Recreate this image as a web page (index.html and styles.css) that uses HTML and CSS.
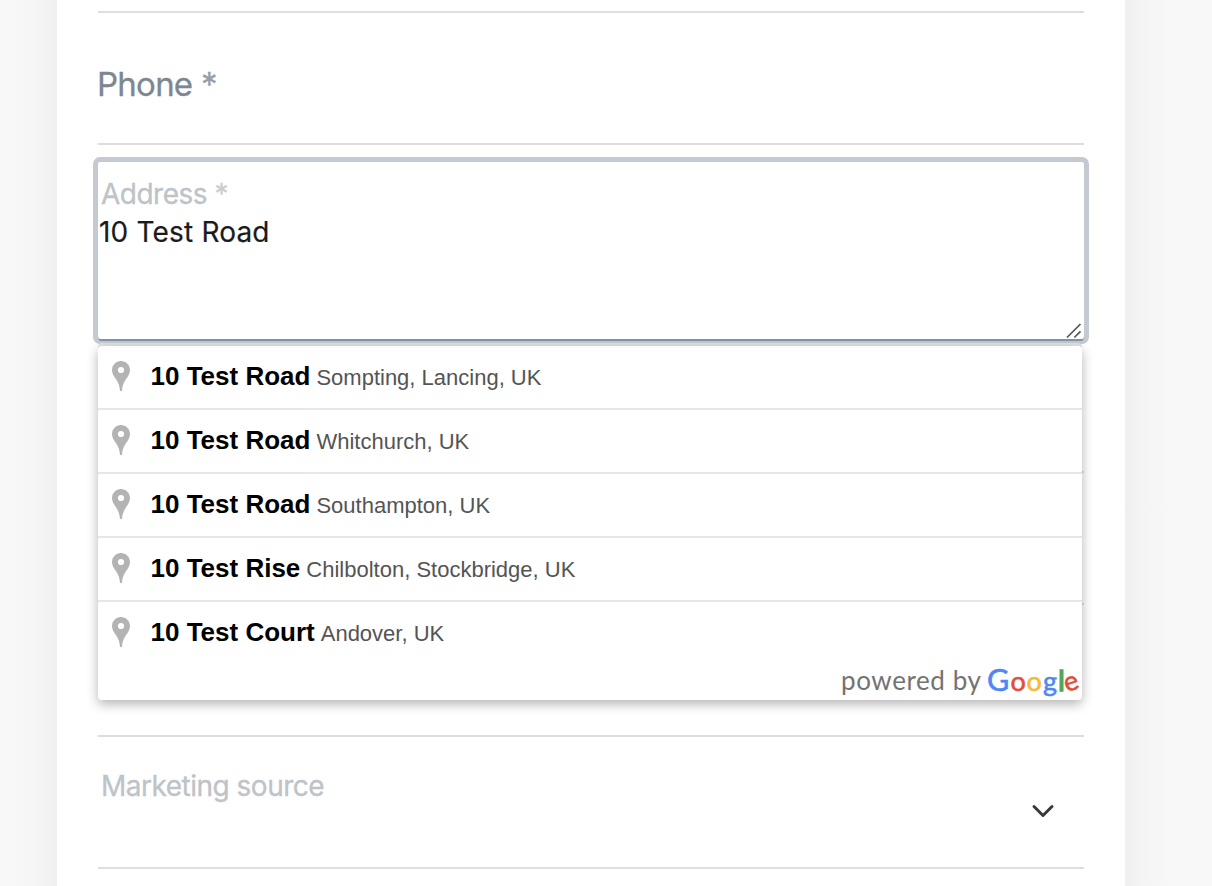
FILE: index.html
```html
<!DOCTYPE html>
<html lang="en">
<head>
<meta charset="utf-8">
<title>Contact details</title>
<link rel="stylesheet" href="styles.css">
</head>
<body>
<svg class="defs" width="0" height="0" aria-hidden="true">
  <symbol id="pin" viewBox="0 0 18 30"><path fill="#b3b3b3" fill-rule="evenodd" d="M9 0C4 0 0 4 0 9c0 3 1.300 5.200 3 7.800C6 21.300 7.600 24 8 30h2c.4-6 2-8.700 5-13.200 1.700-2.600 3-4.800 3-7.800 0-5-4-9-9-9zm0 5.900a3.100 3.100 0 1 1 0 6.200 3.100 3.100 0 0 1 0-6.200z"/></symbol>
</svg>
<main class="card">
  <div class="field field-cut"></div>
  <div class="field field-phone"><label class="label">Phone <span class="req">*</span></label></div>
  <div class="address">
    <div class="address-box">
      <label class="small-label">Address <span class="req">*</span></label>
      <div class="value">10 Test Road</div>
      <svg class="grip" width="16" height="16" viewBox="0 0 16 16" fill="none" stroke="#555" stroke-width="1.700"><path d="M1 14.500 14.500 1M8.300 14.500l6.200-6.200"/></svg>
    </div>
    <div class="suggestions">
      <div class="item"><svg class="pin"><use href="#pin"/></svg><b>10 Test Road</b><span>Sompting, Lancing, UK</span></div>
      <div class="item"><svg class="pin"><use href="#pin"/></svg><b>10 Test Road</b><span>Whitchurch, UK</span></div>
      <div class="item"><svg class="pin"><use href="#pin"/></svg><b>10 Test Road</b><span>Southampton, UK</span></div>
      <div class="item"><svg class="pin"><use href="#pin"/></svg><b>10 Test Rise</b><span>Chilbolton, Stockbridge, UK</span></div>
      <div class="item"><svg class="pin"><use href="#pin"/></svg><b>10 Test Court</b><span>Andover, UK</span></div>
      <div class="powered">
        <svg width="244" height="44" viewBox="0 0 244 44">
          <text class="by" x="3" y="36" textLength="140">powered by</text>
          <g class="google"><text class="blue cap" x="149" y="36.500">G</text><text class="red" x="172.500" y="36.500">o</text><text class="yellow" x="188.500" y="36.500">o</text><text class="blue" x="205" y="36.500">g</text><text class="green tall" x="220" y="36.500">l</text><text class="red" x="226.500" y="36.500" transform="rotate(-18 233 30)">e</text></g>
        </svg>
      </div>
    </div>
  </div>
  <div class="field behind-a"></div>
  <div class="field"></div>
  <div class="field"></div>
  <div class="field field-source"><label class="small-label">Marketing source</label>
    <svg class="chevron" width="24" height="16" viewBox="0 0 24 16" fill="none" stroke="#343a40" stroke-width="3" stroke-linecap="round" stroke-linejoin="round"><path d="M3 3.500l9 9 9-9"/></svg>
  </div>
</main>
</body>
</html>
```
FILE: styles.css
```css
* { box-sizing: border-box; }
html, body { height: 100%; }
body { margin: 0; background: linear-gradient(90deg, #f8f8f8 12px, #f4f4f4 40px, #efefef 57px, #efefef 1125px, #f4f4f4 1142px, #f8f8f8 1170px); font-family: Inter, "Liberation Sans", sans-serif; }
.defs { position: absolute; }
.card { width: 1068px; height: 100%; margin-left: 57px; padding: 0 41px; background: #fff; }
.field { width: 986px; height: 132px; border-bottom: 2px solid #dedede; }
.field-cut { height: 13px; }
.field-phone { padding-top: 51px; }
.label { display: block; margin-left: -1px; font-size: 33px; line-height: 40px; letter-spacing: -.75px; color: #7c8793; -webkit-text-stroke: .3px currentColor; }
.small-label { display: block; font-size: 28px; line-height: 34px; letter-spacing: -.5px; color: #bdc3c8; white-space: nowrap; -webkit-text-stroke: .3px currentColor; }
.req { opacity: .8; }
.address { position: relative; height: 199px; padding-top: 12px; margin: 0 -5px; }
.address-box { position: relative; height: 187px; border: 5px solid #c5cad2; border-bottom-width: 3px; border-radius: 7px; padding: 15px 1px 0; box-shadow: inset 0 -2px #8494a1; }
.address-box .small-label { padding-left: 2px; }
.value { margin-top: 4px; font-size: 28px; line-height: 34px; letter-spacing: .18px; color: #1b1b1d; -webkit-text-stroke: .2px currentColor; }
.grip { position: absolute; right: 2px; bottom: 2px; }
.suggestions { position: absolute; z-index: 2; left: 5px; top: 201px; width: 984px; height: 354px; background: #fff; border-radius: 4px; box-shadow: 0 4px 12px rgba(0,0,0,.3), 0 -3px #e3e3e2; font-family: "Liberation Sans", Arial, sans-serif; }
.item { height: 64px; display: flex; align-items: baseline; border-top: 2px solid #e6e6e6; padding-left: 14px; line-height: 60px; white-space: nowrap; }
.item:first-child { height: 62px; border-top: 0; }
.pin { width: 18px; height: 30px; align-self: flex-start; margin: 15px 20.500px 0 0; }
.item b { font-size: 26px; color: #000; }
.item span { margin-left: 6px; font-size: 22px; color: #545454; }
.powered { height: 44px; display: flex; justify-content: flex-end; margin-top: -10px; font-family: Lato, sans-serif; }
.by { font-size: 26px; fill: #737373; }
.google { font-size: 27px; stroke-width: .6px; }
.google .cap { font-size: 30.500px; }
.google .tall { font-size: 29px; stroke-width: 1.300px; }
.blue { fill: #4e87f4; stroke: #4e87f4; }
.red { fill: #df4f3b; stroke: #df4f3b; }
.yellow { fill: #f4bc35; stroke: #f4bc35; }
.green { fill: #53a45a; stroke: #53a45a; }
.behind-a { height: 129px; }
.field-source { display: flex; justify-content: space-between; padding: 32px 29px 0 3px; }
.chevron { margin-top: 34px; }
```
